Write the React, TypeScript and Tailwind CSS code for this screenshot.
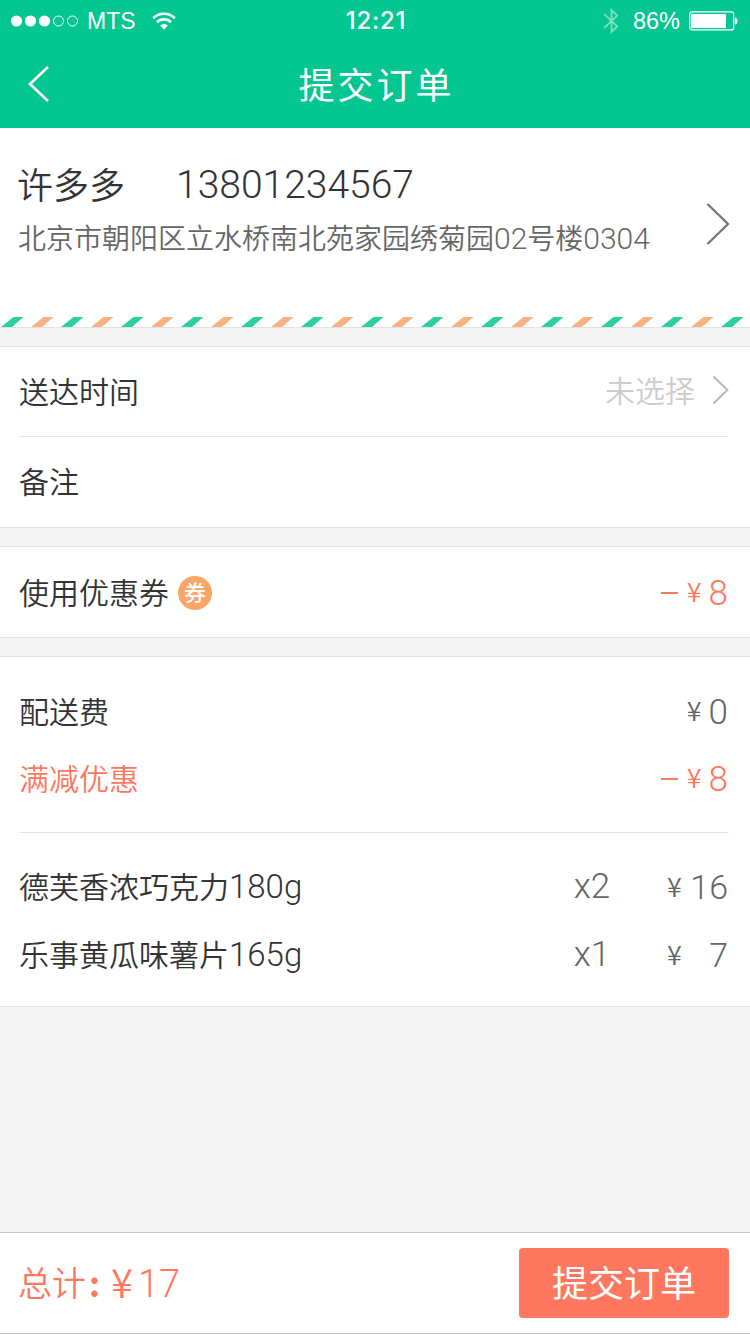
import React from "react";

interface OrderItem {
  name: string;
  weight: string;
  count: number;
  price: number;
}

interface PriceProps {
  amount: number;
  minus?: boolean;
  className?: string;
}

const items: OrderItem[] = [
  { name: "德芙香浓巧克力", weight: "180g", count: 2, price: 16 },
  { name: "乐事黄瓜味薯片", weight: "165g", count: 1, price: 7 },
];

const StatusBar = () => (
  <div className="grid h-10 grid-cols-3 items-center px-[11px] font-['Liberation_Sans',sans-serif] text-[24px] leading-[42px]">
    <div className="flex items-center">
      <svg width="68" height="12" viewBox="0 0 68 12" className="mr-2">
        {[5.5, 19.5, 33.5].map((cx) => (
          <circle key={cx} cx={cx} cy="6" r="5.6" fill="#fff" />
        ))}
        {[47.5, 61.5].map((cx) => (
          <circle key={cx} cx={cx} cy="6" r="5" fill="none" stroke="#fff" />
        ))}
      </svg>
      <span className="text-[23px]">MTS</span>
      <svg width="24" height="19" viewBox="0 0 24 19" className="ml-4">
        <g fill="none" stroke="#fff" strokeWidth="2.6">
          <path d="M1.2 6.2C7.2.3 16.8.3 22.8 6.2" />
          <path d="M4.9 10.2c4-3.8 10.2-3.8 14.2 0" />
        </g>
        <path d="M8.2 13.4c2.2-2 5.4-2 7.6 0L12 17.8z" fill="#fff" />
      </svg>
    </div>
    <div className="pl-0.5 text-center font-['Inter',sans-serif] font-medium tracking-[0.7px]">
      12:21
    </div>
    <div className="flex items-center justify-end">
      <svg width="16" height="26" viewBox="0 0 16 26" className="mr-3.5">
        <path
          d="M1.2 6.2l13 12.2L8.5 24V2l5.7 5.6L1.2 19.8"
          fill="none"
          stroke="#7fe0c1"
          strokeWidth="1.8"
        />
      </svg>
      <span className="text-[23.5px]">86%</span>
      <svg width="50" height="20" viewBox="0 0 50 20" className="ml-[9px]">
        <rect
          x=".7"
          y=".9"
          width="44"
          height="18"
          rx="2.5"
          fill="none"
          stroke="#fff"
          strokeWidth="1.2"
        />
        <rect x="2" y="3" width="35" height="14" rx=".5" fill="#fff" />
        <path d="M46 6.5c3.5 1 3.5 6 0 7z" fill="#fff" />
      </svg>
    </div>
  </div>
);

const Price: React.FC<PriceProps> = ({ amount, minus, className = "" }) => (
  <div className={`flex items-center ${className}`}>
    {minus && <span className="mr-[9px] h-0.5 w-[17px] bg-current" />}
    <span className="pb-1 text-[27px] leading-none">¥</span>
    <span className="ml-[7px] pt-px font-['Roboto',sans-serif] text-[35px] leading-none">
      {amount}
    </span>
  </div>
);

const Divider = () => <div className="mr-[21px] ml-[19px] h-px bg-[#e5e5e5]" />;

export default function App() {
  return (
    <div className="flex h-[1334px] w-[750px] flex-col bg-[#f5f5f5] font-['Noto_Sans_CJK_SC',sans-serif] text-[30px] font-[350] text-[#333]">
      <header className="h-32 bg-[#04c691] font-normal text-white">
        <StatusBar />
        <div className="grid h-[88px] grid-cols-3 items-center px-7">
          <svg width="22" height="38" viewBox="0 0 22 38">
            <path
              d="M20 2L2 19l18 17"
              fill="none"
              stroke="#fff"
              strokeWidth="2.6"
            />
          </svg>
          <h1 className="pb-[3px] pl-[3px] text-center text-[36px] leading-[84px] tracking-[3px] whitespace-nowrap">
            提交订单
          </h1>
        </div>
      </header>

      <section className="flex h-[189px] justify-between bg-white pt-[34px] pr-5 pl-[17px]">
        <div>
          <div className="flex h-[46px] items-center">
            <span className="w-[159px] pb-[5px] text-[36px]">许多多</span>
            <span className="font-['Roboto',sans-serif] text-[39px]">
              13801234567
            </span>
          </div>
          <div className="mt-1.5 flex h-[46px] items-center pl-px text-[28px] whitespace-nowrap text-[#666]">
            北京市朝阳区立水桥南北苑家园绣菊园
            <span className="pt-0.5 font-['Roboto',sans-serif] text-[30px]">
              02
            </span>
            号楼
            <span className="pt-0.5 font-['Roboto',sans-serif] text-[30px]">
              0304
            </span>
          </div>
        </div>
        <svg width="24" height="44" viewBox="0 0 24 44" className="mt-10">
          <path
            d="M1.5 2L22 22 1.5 42"
            fill="none"
            stroke="#777"
            strokeWidth="2.4"
          />
        </svg>
      </section>
      <svg width="750" height="10" className="bg-white">
        <defs>
          <pattern
            id="airmail"
            width="60"
            height="10"
            patternUnits="userSpaceOnUse"
          >
            <path d="M1 10L13.5 0H23.5L12 10z" fill="#2bd0a0" />
            <path d="M31 10L43.5 0H53.5L42 10z" fill="#f7b183" />
          </pattern>
        </defs>
        <rect width="750" height="10" fill="url(#airmail)" />
      </svg>

      <section className="border-t border-[#e2e2e2]">
        <div className="mt-[18px] border-y border-[#e2e2e2] bg-white">
          <div className="flex h-[89px] items-center justify-between pr-5 pb-[3px] pl-[19px]">
            <span>送达时间</span>
            <div className="flex items-center text-[#ccc]">
              <span className="pb-0.5">未选择</span>
              <svg
                width="18"
                height="30"
                viewBox="0 0 18 30"
                className="ml-[17px]"
              >
                <path
                  d="M1.5 1.5L15.5 15 1.5 28.5"
                  fill="none"
                  stroke="#b5b5b5"
                  strokeWidth="1.8"
                />
              </svg>
            </div>
          </div>
          <Divider />
          <div className="flex h-[90px] items-center pb-1 pl-[19px]">备注</div>
        </div>
      </section>

      <section className="mt-[18px] flex h-[92px] items-center border-y border-[#e2e2e2] bg-white pt-px pr-[22px] pl-[19px]">
        <span className="pb-[3px]">使用优惠券</span>
        <span className="ml-[9px] flex size-[34px] items-center justify-center rounded-full bg-[#fca566] pb-[3px] text-[22px] leading-none font-medium text-white">
          券
        </span>
        <Price amount={8} minus className="ml-auto text-[#ff775e]" />
      </section>

      <section className="mt-[18px] border-y border-[#e2e2e2] bg-white">
        <div className="flex h-[175px] flex-col pt-[21px] pr-[22px] pl-[19px]">
          <div className="flex h-[67px] items-center justify-between">
            <span className="pb-[3px]">配送费</span>
            <Price amount={0} className="text-[#666]" />
          </div>
          <div className="flex h-[67px] items-center justify-between text-[#ff775e]">
            <span className="pb-[3px]">满减优惠</span>
            <Price amount={8} minus />
          </div>
        </div>
        <Divider />
        <div className="h-[173px] pt-5 pr-[22px] pl-[19px]">
          {items.map((item) => (
            <div key={item.name} className="flex h-[68px] items-center">
              <span className="flex-1">
                {item.name}
                <span className="font-['Roboto',sans-serif] text-[33px]">
                  {item.weight}
                </span>
              </span>
              <span className="w-[38px] text-center font-['Roboto',sans-serif] text-[35px] text-[#666]">
                x{item.count}
              </span>
              <div className="ml-[56px] flex w-[61px] items-center justify-between text-[#666]">
                <span className="pb-1 text-[27px] leading-none">¥</span>
                <span className="font-['Roboto',sans-serif] text-[34px] leading-none">
                  {item.price}
                </span>
              </div>
            </div>
          ))}
        </div>
      </section>

      <footer className="mt-auto flex h-[102px] items-center justify-between border-y border-[#c8c8c8] bg-white pr-[21px] pl-[18px]">
        <div className="flex items-center text-[34px] leading-none text-[#ff775e]">
          <span className="pb-0.5">总计</span>
          <span className="ml-[3px] w-[22px] font-bold">:</span>
          <span className="pb-1 text-[40px]">¥</span>
          <span className="ml-[5px] pt-0.5 font-['Roboto',sans-serif] text-[38px]">
            17
          </span>
        </div>
        <button
          type="button"
          className="h-[70px] w-[210px] rounded bg-[#ff775e] pb-[3px] text-[36px] leading-[67px] font-normal text-white"
        >
          提交订单
        </button>
      </footer>
    </div>
  );
}
